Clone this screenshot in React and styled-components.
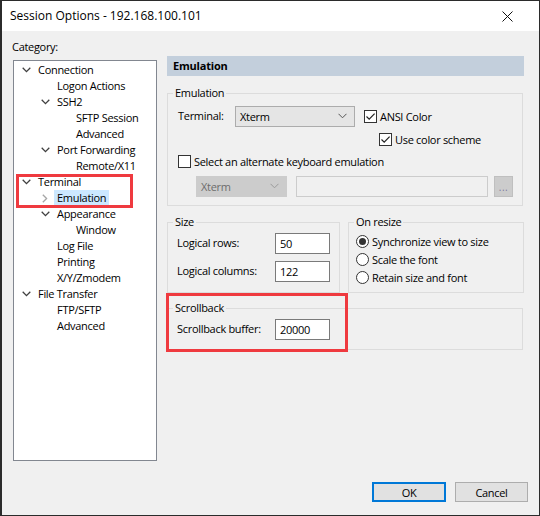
import React from "react";
import styled, { createGlobalStyle } from "styled-components";

const GlobalStyle = createGlobalStyle`
  html, body {
    margin: 0;
    padding: 0;
    background: #2b2b2b;
  }
  body {
    font-family: "Open Sans", "Noto Sans", sans-serif;
    font-size: 11px;
    letter-spacing: -0.3px;
    color: #000;
  }
  * {
    box-sizing: border-box;
  }
`;

const treeItems = [
  { label: "Connection", level: 0, toggle: "open" },
  { label: "Logon Actions", level: 1 },
  { label: "SSH2", level: 1, toggle: "open" },
  { label: "SFTP Session", level: 2 },
  { label: "Advanced", level: 2 },
  { label: "Port Forwarding", level: 1, toggle: "open" },
  { label: "Remote/X11", level: 2 },
  { label: "Terminal", level: 0, toggle: "open" },
  { label: "Emulation", level: 1, toggle: "closed", selected: true },
  { label: "Appearance", level: 1, toggle: "open" },
  { label: "Window", level: 2 },
  { label: "Log File", level: 1 },
  { label: "Printing", level: 1 },
  { label: "X/Y/Zmodem", level: 1 },
  { label: "File Transfer", level: 0, toggle: "open" },
  { label: "FTP/SFTP", level: 1 },
  { label: "Advanced", level: 1 },
];

function Toggle({ kind }) {
  if (kind === "open") {
    return (
      <ToggleBox>
        <svg width="9" height="6" viewBox="0 0 9 6">
          <path d="M0.7 0.8 L4.5 4.6 L8.3 0.8" fill="none" stroke="#404040" strokeWidth="1.3" />
        </svg>
      </ToggleBox>
    );
  }
  if (kind === "closed") {
    return (
      <ToggleBox>
        <svg width="6" height="9" viewBox="0 0 6 9">
          <path d="M0.8 0.7 L4.6 4.5 L0.8 8.3" fill="none" stroke="#a6a6a6" strokeWidth="1.3" />
        </svg>
      </ToggleBox>
    );
  }
  return <ToggleBox />;
}

function Chevron({ color = "#555" }) {
  return (
    <svg width="9" height="6" viewBox="0 0 9 6">
      <path d="M0.5 0.8 L4.5 4.8 L8.5 0.8" fill="none" stroke={color} strokeWidth="1" />
    </svg>
  );
}

function Check({ checked, children }) {
  return (
    <CheckRow>
      <CheckBox>
        {checked && (
          <svg width="11" height="11" viewBox="0 0 11 11">
            <path d="M1.5 5.5 L4.2 8.2 L9.6 2.6" fill="none" stroke="#222" strokeWidth="1.2" />
          </svg>
        )}
      </CheckBox>
      <CheckLabel>{children}</CheckLabel>
    </CheckRow>
  );
}

function Radio({ checked, children }) {
  return (
    <RadioRow>
      <RadioCircle>{checked && <RadioDot />}</RadioCircle>
      <CheckLabel>{children}</CheckLabel>
    </RadioRow>
  );
}

export default function App() {
  return (
    <>
      <GlobalStyle />
      <Window>
        <TitleBar>
          <Title>Session Options - 192.168.100.101</Title>
          <CloseButton>
            <svg width="11" height="11" viewBox="0 0 11 11">
              <path d="M0.5 0.5 L10.5 10.5 M10.5 0.5 L0.5 10.5" stroke="#111" strokeWidth="1" />
            </svg>
          </CloseButton>
        </TitleBar>

        <Main>
          <LeftColumn>
            <CategoryLabel>Category:</CategoryLabel>
            <Tree>
              {treeItems.map((item, i) => (
                <TreeRow key={i} $level={item.level}>
                  <Toggle kind={item.toggle} />
                  <TreeLabel $selected={item.selected}>{item.label}</TreeLabel>
                </TreeRow>
              ))}
              <TreeMark />
            </Tree>
          </LeftColumn>

          <RightColumn>
            <PageHeader>Emulation</PageHeader>

            <Group $width={356}>
              <Legend>Emulation</Legend>
              <GroupBody $pad="6px 0 8px 10px">
                <Row>
                  <FieldLabel $width={57}>Terminal:</FieldLabel>
                  <Select $width={120}>
                    <span>Xterm</span>
                    <Chevron />
                  </Select>
                  <CheckSlot $ml={9}>
                    <Check checked>ANSI Color</Check>
                  </CheckSlot>
                </Row>
                <Row $mt={6} $pl={201}>
                  <Check checked>Use color scheme</Check>
                </Row>
                <Row $mt={9}>
                  <Check>Select an alternate keyboard emulation</Check>
                </Row>
                <Row $mt={8} $pl={18}>
                  <Select $width={91} $disabled>
                    <span>Xterm</span>
                    <Chevron color="#9a9a9a" />
                  </Select>
                  <DisabledField />
                  <DotsButton>...</DotsButton>
                </Row>
              </GroupBody>
            </Group>

            <GroupRow>
              <Group $width={173}>
                <Legend>Size</Legend>
                <GroupBody $pad="4px 0 10px 9px">
                  <Row>
                    <FieldLabel $width={98}>Logical rows:</FieldLabel>
                    <TextBox>50</TextBox>
                  </Row>
                  <Row $mt={7}>
                    <FieldLabel $width={98}>Logical columns:</FieldLabel>
                    <TextBox>122</TextBox>
                  </Row>
                </GroupBody>
              </Group>
              <Group $width={176}>
                <Legend>On resize</Legend>
                <GroupBody $pad="3px 0 5px 7px">
                  <Radio checked>Synchronize view to size</Radio>
                  <Radio>Scale the font</Radio>
                  <Radio>Retain size and font</Radio>
                </GroupBody>
              </Group>
            </GroupRow>

            <ScrollbackWrap>
              <Group $width={356}>
                <Legend>Scrollback</Legend>
                <GroupBody $pad="4px 0 9px 9px">
                  <Row>
                    <FieldLabel $width={98}>Scrollback buffer:</FieldLabel>
                    <TextBox>20000</TextBox>
                  </Row>
                </GroupBody>
              </Group>
              <ScrollbackMark />
            </ScrollbackWrap>
          </RightColumn>
        </Main>

        <Footer>
          <Button $default>OK</Button>
          <Button>Cancel</Button>
        </Footer>
      </Window>
    </>
  );
}

// window frame

const Window = styled.div`
  margin: 1px 0 0 2px;
  width: 537px;
  height: 514px;
  display: flex;
  flex-direction: column;
  background: #f0f0f0;
`;

const TitleBar = styled.div`
  height: 30px;
  flex: none;
  display: flex;
  align-items: center;
  justify-content: space-between;
  padding-left: 8px;
  background: #fff;
`;

const Title = styled.div`
  font-size: 12px;
  letter-spacing: 0;
  color: #000;
  margin-top: -1px;
`;

const CloseButton = styled.div`
  width: 46px;
  height: 30px;
  display: flex;
  align-items: center;
  justify-content: center;
  margin-right: 9px;
  margin-top: 1px;
`;

const Main = styled.div`
  display: flex;
  padding: 8px 0 0 11px;
`;

// category tree

const LeftColumn = styled.div`
  width: 144px;
  flex: none;
`;

const CategoryLabel = styled.div`
  height: 16px;
  line-height: 16px;
  margin: 0 0 5px -1px;
`;

const Tree = styled.div`
  position: relative;
  height: 401px;
  padding-top: 1px;
  background: #fff;
  border: 1px solid #828790;
`;

const TreeRow = styled.div`
  height: 16px;
  display: flex;
  align-items: center;
  padding-left: ${(p) => p.$level * 19 + 4}px;
`;

const ToggleBox = styled.span`
  width: 16px;
  height: 16px;
  flex: none;
  display: flex;
  align-items: center;
  justify-content: center;
`;

const TreeLabel = styled.span`
  margin-left: 1px;
  padding: 0 3px;
  height: 16px;
  line-height: 16px;
  white-space: nowrap;
  color: #000;
  background: ${(p) => (p.$selected ? "#cce8ff" : "transparent")};
`;

const TreeMark = styled.div`
  position: absolute;
  left: 2px;
  top: 113px;
  width: 117px;
  height: 34px;
  border: 3px solid #ef3a3f;
  pointer-events: none;
`;

// options page

const RightColumn = styled.div`
  width: 357px;
  flex: none;
  margin: 17px 0 0 10px;
`;

const PageHeader = styled.div`
  height: 20px;
  line-height: 20px;
  padding-left: 6px;
  margin-bottom: 10px;
  font-weight: bold;
  letter-spacing: -0.2px;
  background: #c3cfdc;
`;

const Group = styled.fieldset`
  margin: 0;
  padding: 0;
  min-width: 0;
  width: ${(p) => p.$width}px;
  border: 1px solid #dcdcdc;
`;

const Legend = styled.legend`
  margin-left: 5px;
  padding: 0 2px;
  line-height: 14px;
  height: 14px;
`;

const GroupBody = styled.div`
  padding: ${(p) => p.$pad};
`;

const GroupRow = styled.div`
  display: flex;
  gap: 8px;
  margin-top: 9px;
`;

const ScrollbackWrap = styled.div`
  position: relative;
  margin-top: 8px;
`;

const ScrollbackMark = styled.div`
  position: absolute;
  left: -1px;
  top: -8px;
  width: 182px;
  height: 59px;
  border: 3px solid #ef3a3f;
  pointer-events: none;
`;

const Row = styled.div`
  display: flex;
  align-items: center;
  margin-top: ${(p) => p.$mt || 0}px;
  padding-left: ${(p) => p.$pl || 0}px;
`;

const FieldLabel = styled.span`
  width: ${(p) => p.$width}px;
  flex: none;
  white-space: nowrap;
  padding-bottom: 2px;
`;

const Select = styled.div`
  width: ${(p) => p.$width}px;
  height: 21px;
  flex: none;
  display: flex;
  align-items: center;
  justify-content: space-between;
  padding: 0 7px 1px 4px;
  background: ${(p) => (p.$disabled ? "#cccccc" : "#e5e5e5")};
  border: 1px solid ${(p) => (p.$disabled ? "#cccccc" : "#acacac")};
  color: ${(p) => (p.$disabled ? "#6d6d6d" : "#000")};
`;

const CheckSlot = styled.div`
  margin-left: ${(p) => p.$ml}px;
`;

const CheckRow = styled.div`
  display: flex;
  align-items: center;
  height: 13px;
`;

const CheckBox = styled.span`
  width: 13px;
  height: 13px;
  flex: none;
  display: flex;
  align-items: center;
  justify-content: center;
  background: #fff;
  border: 1px solid #333;
`;

const CheckLabel = styled.span`
  margin-left: 3px;
  white-space: nowrap;
`;

const RadioRow = styled.div`
  height: 18px;
  display: flex;
  align-items: center;
`;

const RadioCircle = styled.span`
  width: 13px;
  height: 13px;
  flex: none;
  display: flex;
  align-items: center;
  justify-content: center;
  border: 1px solid #333;
  border-radius: 50%;
  background: #fff;
`;

const RadioDot = styled.span`
  width: 7px;
  height: 7px;
  border-radius: 50%;
  background: #333;
`;

const DisabledField = styled.div`
  width: 192px;
  height: 21px;
  margin-left: 9px;
  background: #f0f0f0;
  border: 1px solid #cccccc;
`;

const DotsButton = styled.div`
  width: 19px;
  height: 21px;
  margin-left: 6px;
  display: flex;
  align-items: flex-end;
  justify-content: center;
  padding-bottom: 4px;
  font-size: 10px;
  line-height: 10px;
  letter-spacing: 0.5px;
  color: #7e7a9e;
  background: #cccccc;
  border: 1px solid #bfbfbf;
`;

const TextBox = styled.div`
  width: 55px;
  height: 21px;
  flex: none;
  display: flex;
  align-items: center;
  padding: 0 0 1px 4px;
  background: #fff;
  border: 1px solid #7a7a7a;
`;

// buttons

const Footer = styled.div`
  margin-top: auto;
  display: flex;
  justify-content: flex-end;
  gap: 9px;
  padding: 0 11px 13px 0;
`;

const Button = styled.div`
  width: ${(p) => (p.$default ? 74 : 73)}px;
  height: 20px;
  display: flex;
  align-items: center;
  justify-content: center;
  background: #e1e1e1;
  border: ${(p) => (p.$default ? "2px solid #0078d7" : "1px solid #adadad")};
`;
